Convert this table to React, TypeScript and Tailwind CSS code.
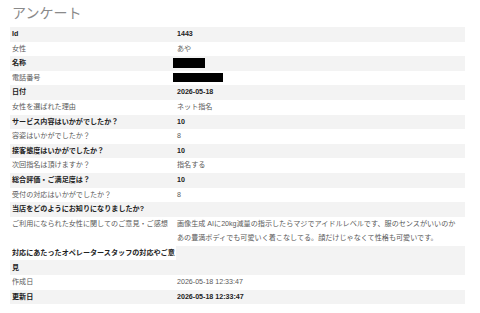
import React from "react";

type Row = {
  label: string;
  value?: React.ReactNode;
};

const rows: Row[] = [
  { label: "Id", value: "1443" },
  { label: "女性", value: "あや" },
  { label: "名称", value: <span className="inline-block w-[32px] h-[10px] bg-black -ml-[4px] align-middle" /> },
  { label: "電話番号", value: <span className="inline-block w-[50px] h-[9px] bg-black -ml-[4px] align-middle" /> },
  { label: "日付", value: "2026-05-18" },
  { label: "女性を選ばれた理由", value: "ネット指名" },
  { label: "サービス内容はいかがでしたか？", value: "10" },
  { label: "容姿はいかがでしたか？", value: "8" },
  { label: "接客態度はいかがでしたか？", value: "10" },
  { label: "次回指名は頂けますか？", value: "指名する" },
  { label: "総合評価・ご満足度は？", value: "10" },
  { label: "受付の対応はいかがでしたか？", value: "8" },
  { label: "当店をどのようにお知りになりましたか?" },
  {
    label: "ご利用になられた女性に関してのご意見・ご感想",
    value: (
      <>
        画像生成 AIに20kg減量の指示したらマジでアイドルレベルです、服のセンスがいいのか
        <br />
        あの豊満ボディでも可愛いく着こなしてる。顔だけじゃなくて性格も可愛いです。
      </>
    ),
  },
  { label: "対応にあたったオペレータースタッフの対応やご意見" },
  { label: "作成日", value: "2026-05-18 12:33:47" },
  { label: "更新日", value: "2026-05-18 12:33:47" },
];

const App = () => {
  return (
    <div
      className="w-full min-h-screen bg-white pl-[10px] pr-[15px] pt-[3px]"
      style={{ fontFamily: '"Liberation Sans", "Noto Sans CJK JP", sans-serif' }}
    >
      <h1 className="text-[14px] leading-[20px] text-[#8a8a8a] font-normal pl-[2px] mb-[4px]">
        アンケート
      </h1>

      <div className="flex flex-col text-[7.1px] leading-[14.6px]">
        {rows.map((row, i) => {
          const odd = i % 2 === 0;
          const special = i === 14;
          return (
            <div
              key={i}
              className={
                "flex " +
                (odd ? "bg-[#f3f3f3] font-bold text-[#222]" : "bg-white text-[#5a5a5a]")
              }
            >
              <div
                className={
                  "w-[166px] shrink-0 pl-[2px] " +
                  (special ? "bg-[linear-gradient(to_bottom,#ffffff_14px,transparent_14px)]" : "")
                }
              >
                {row.label}
              </div>
              <div className="flex-1 pl-[1px] min-h-[14.6px]">{row.value}</div>
            </div>
          );
        })}
      </div>
    </div>
  );
};

export default App;
